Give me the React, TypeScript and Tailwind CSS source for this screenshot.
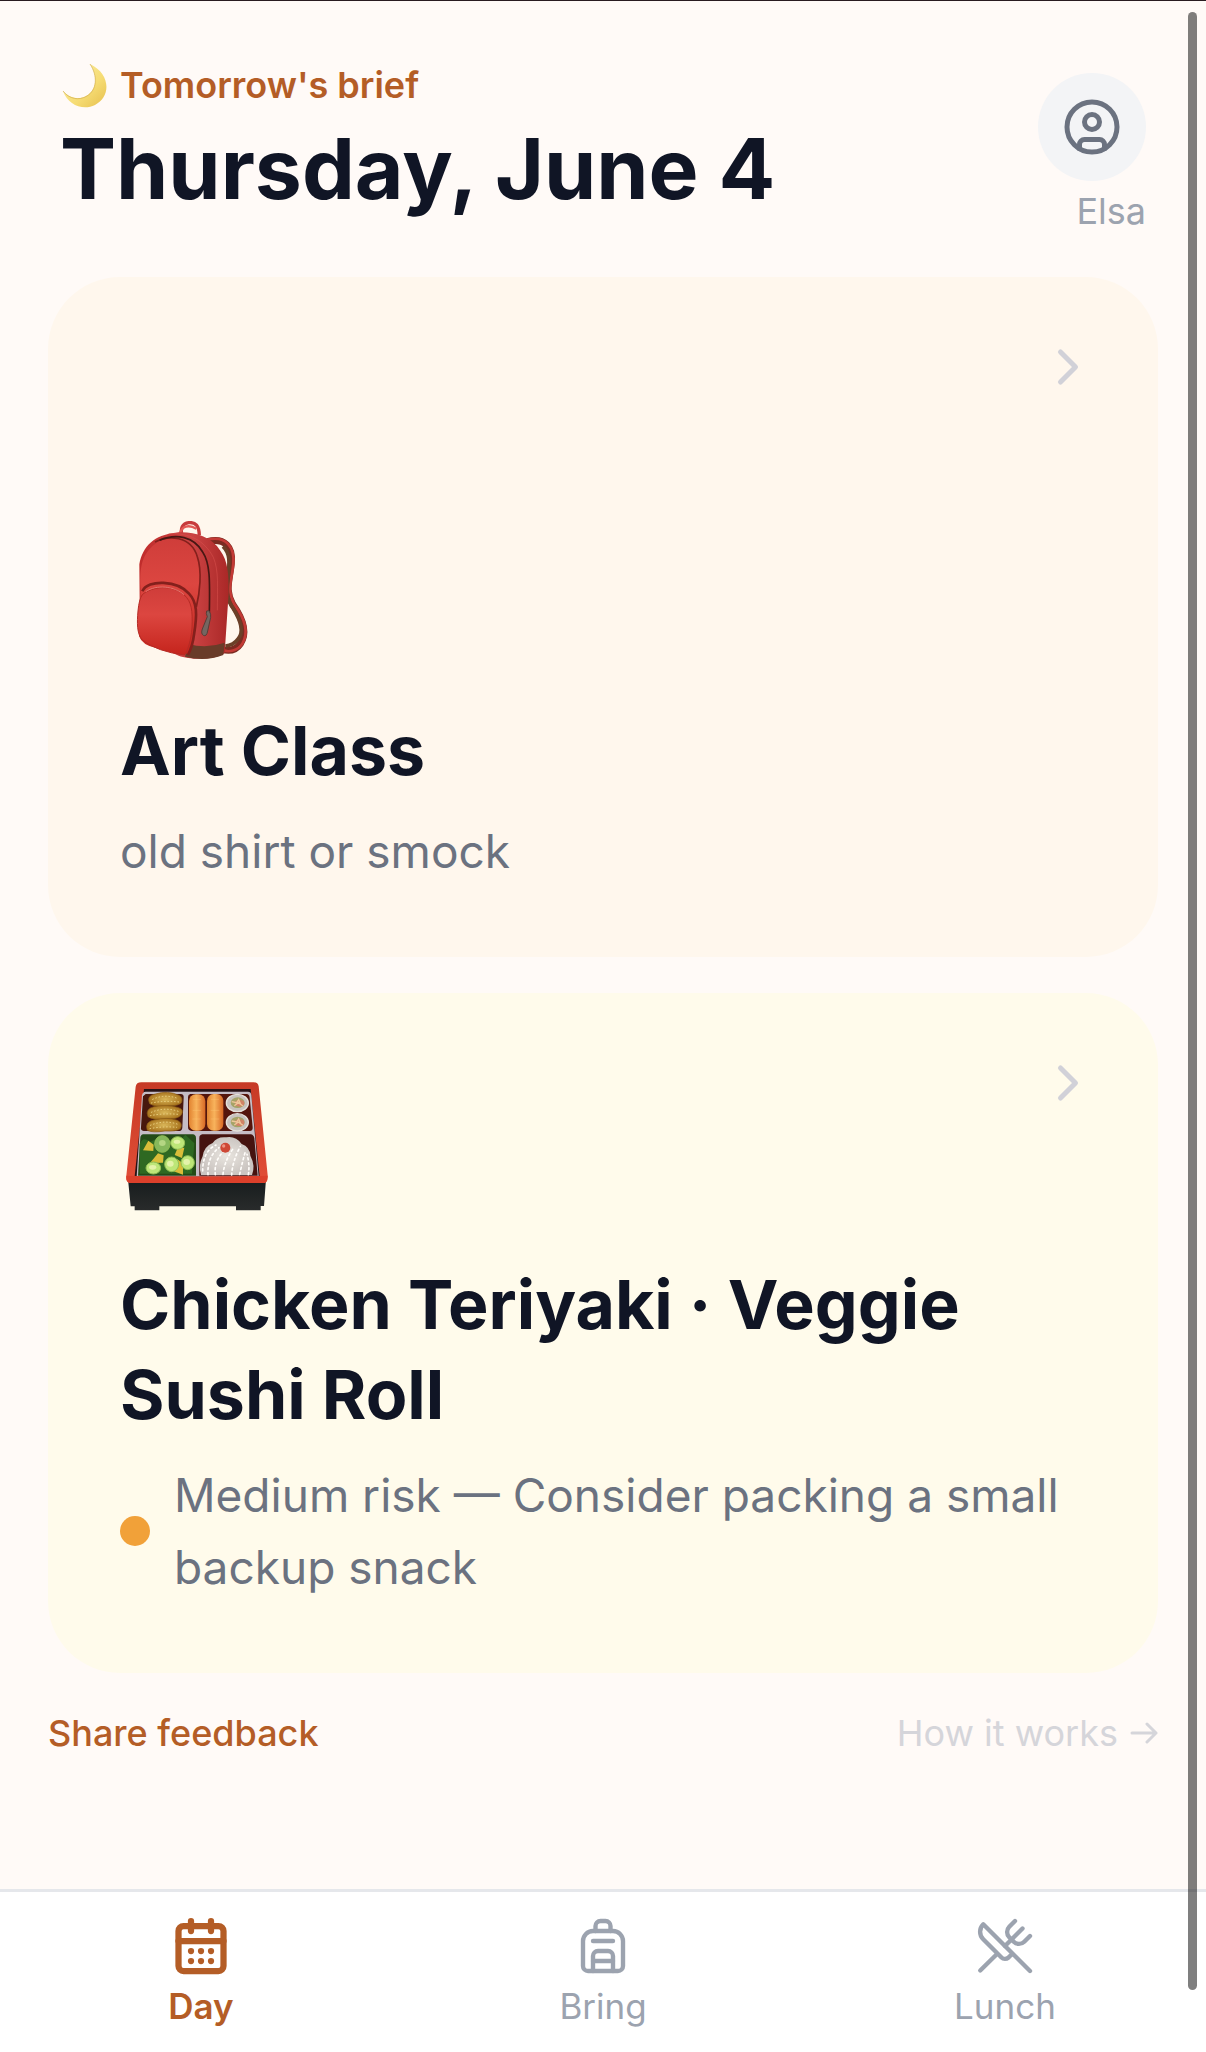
import type { ReactNode } from "react";
import { Backpack, CalendarDays, ChevronRight, CircleUser, UtensilsCrossed } from "lucide-react";

function MoonIcon() {
  return (
    <svg className="h-12 w-12" viewBox="0 0 48 48" aria-hidden="true">
      <defs>
        <linearGradient id="moon" x1="0" y1="0" x2="1" y2="1">
          <stop offset="0" stopColor="#fbf0a8" />
          <stop offset="0.6" stopColor="#f6dc74" />
          <stop offset="1" stopColor="#e6bf4d" />
        </linearGradient>
      </defs>
      <path d="M30 3C51 13 51 36 35 44C23 50 8 44 3 30C9 37 19 39 26 35C37 29 38 15 30 3Z" fill="url(#moon)" />
      <path d="M3 30C9 38 19 40 27 35C37 29 38 15 30 3" fill="none" stroke="#d3b154" strokeWidth="1" opacity="0.7" />
    </svg>
  );
}

function ArrowIcon() {
  return (
    <svg className="h-6 w-7" viewBox="0 0 28 24" fill="none" stroke="currentColor" strokeWidth="3" strokeLinecap="round" strokeLinejoin="round" aria-hidden="true">
      <path d="M2 12H26M17 3L26 12L17 21" />
    </svg>
  );
}

function BackpackPicture() {
  return (
    <svg className="h-36 w-36" viewBox="0 0 432 432" aria-hidden="true">
      <defs>
        <linearGradient id="bag" x1="0" y1="0" x2="0" y2="1">
          <stop offset="0" stopColor="#cf3d3a" />
          <stop offset="0.4" stopColor="#dc4640" />
          <stop offset="1" stopColor="#c5241c" />
        </linearGradient>
        <linearGradient id="bagSide" x1="0" y1="0" x2="1" y2="0">
          <stop offset="0" stopColor="#c02c2b" />
          <stop offset="0.6" stopColor="#cb4343" />
          <stop offset="1" stopColor="#aa2827" />
        </linearGradient>
      </defs>
      <path d="M262 62C315 48 339 80 334 126C328 181 314 207 338 250C372 298 382 337 361 368C347 389 325 390 308 386" fill="none" stroke="#7b2b21" strokeWidth="21" />
      <path d="M262 56C321 43 344 80 340 128C335 181 319 206 343 250C378 298 386 337 367 368C353 390 326 394 310 388" fill="none" stroke="#c33a35" strokeWidth="8" />
      <path d="M309 76C332 98 328 126 324 174C319 215 322 239 340 263C366 305 371 333 355 353C345 367 331 374 316 375" fill="none" stroke="#6b4028" strokeWidth="11" />
      <path d="M186 43C180 22 188 7 206 5C227 3 237 14 238 43" fill="none" stroke="#c73b3c" strokeWidth="10" />
      <path d="M179 38C186 16 205 9 229 23" fill="none" stroke="#e35a56" strokeWidth="7" />
      <path d="M60 350L58 130C68 74 104 42 166 35C213 30 274 44 301 89C324 120 326 159 326 215L314 396C286 418 210 417 176 404Z" fill="url(#bagSide)" />
      <path d="M205 369Q260 384 314 365L310 402Q255 423 195 407Z" fill="#693c29" />
      <path d="M62 205C57 129 70 94 112 64C154 35 210 53 230 100C248 142 243 205 229 265Q231 329 209 400L111 382Q66 373 57 345Z" fill="url(#bag)" />
      <path d="M105 63C145 42 213 43 232 107C247 151 239 216 229 258" fill="none" stroke="#84201c" strokeWidth="5" />
      <path d="M119 58C168 36 222 47 248 93C270 126 270 175 268 275" fill="none" stroke="#471713" strokeWidth="5" />
      <path d="M146 38C208 35 253 58 280 109C297 149 292 201 292 268" fill="none" stroke="#db5450" strokeWidth="3" opacity="0.5" />
      <path d="M67 211C83 174 173 178 207 218C232 244 232 281 222 341Q218 375 204 402" fill="none" stroke="#84201c" strokeWidth="8" />
      <path d="M67 221C96 195 158 190 193 222C215 243 218 267 216 321C213 357 204 386 194 402Q111 392 67 357C50 338 51 304 54 270Q57 235 67 221Z" fill="url(#bag)" stroke="#b52b25" strokeWidth="3" />
      <path d="M77 212C109 190 163 195 192 221" fill="none" stroke="#e6756d" strokeWidth="3" />
      <path d="M262 287Q257 277 260 270L267 269Q274 280 272 289L263 330Q260 348 250 343Q242 338 247 324Z" fill="#746661" stroke="#593e38" strokeWidth="3" />
    </svg>
  );
}

function BentoPicture() {
  return (
    <svg className="h-36 w-36 overflow-visible" viewBox="-12 0 432 432" aria-hidden="true">
      <defs>
        <linearGradient id="tray" x1="0" y1="0" x2="0" y2="1">
          <stop offset="0" stopColor="#c63a25" />
          <stop offset="1" stopColor="#e24e37" />
        </linearGradient>
        <linearGradient id="box" x1="0" y1="0" x2="0" y2="1">
          <stop offset="0" stopColor="#171c1d" />
          <stop offset="1" stopColor="#292b2b" />
        </linearGradient>
        <linearGradient id="salmon" x1="0" y1="0" x2="1" y2="0">
          <stop offset="0" stopColor="#e28431" />
          <stop offset="0.45" stopColor="#f8b35c" />
          <stop offset="1" stopColor="#d86925" />
        </linearGradient>
        <radialGradient id="croquette">
          <stop offset="0" stopColor="#d9b658" />
          <stop offset="1" stopColor="#a9751f" />
        </radialGradient>
        <radialGradient id="rice">
          <stop offset="0" stopColor="#e9e5df" />
          <stop offset="1" stopColor="#cbc5c1" />
        </radialGradient>
      </defs>
      <path d="M12 313H426L420 393H410V406H336V394H106V406H32V394H20Z" fill="url(#box)" />
      <path d="M52 22H390Q402 22 404 34L431 301Q433 324 418 324H20Q4 324 7 302L35 35Q37 22 52 22Z" fill="url(#tray)" />
      <path d="M60 42H380L407 304H32Z" fill="#271316" />
      <path d="M65 50H372Q381 50 382 60L404 304H38L54 61Q56 50 65 50Z" fill="#c5bcc5" />
      <path d="M65 57H170Q180 57 179 68L175 158Q174 168 164 168H59Q49 167 51 157L57 64Z" fill="#48170d" />
      <path d="M199 57H368Q376 57 377 68L386 157Q387 168 377 168H203Q192 167 192 157V66Q192 58 199 57Z" fill="#54150c" />
      <path d="M58 178H206Q216 179 216 190V302H42L49 188Q50 179 58 178Z" fill="#244b17" />
      <path d="M235 178H380Q389 179 391 190L401 302H226V188Q226 180 235 178Z" fill="#45130f" />
      <g fill="url(#croquette)" stroke="#8b5c17" strokeWidth="2">
        <path d="M77 86Q66 62 94 57Q132 45 165 61Q177 67 173 82Q166 93 136 92Q96 98 77 86Z" />
        <path d="M72 125Q62 102 90 95Q130 87 164 98Q182 104 171 121Q158 134 128 131Q90 137 72 125Z" />
        <path d="M70 166Q61 141 90 135Q131 125 160 136Q178 145 169 161Q157 170 123 168Q85 174 70 166Z" />
      </g>
      <g fill="none" stroke="#efd889" strokeWidth="3" strokeDasharray="2 8" strokeLinecap="round">
        <path d="M86 73Q121 56 161 70M82 84Q122 76 165 81M82 112Q121 95 163 109M79 122Q119 114 162 118M79 151Q120 134 159 147M78 161Q118 153 158 157" />
      </g>
      <rect x="195" y="58" width="49" height="109" rx="20" fill="url(#salmon)" />
      <rect x="249" y="57" width="49" height="110" rx="20" fill="url(#salmon)" />
      <path d="M207 73H231M206 106H231M205 132H230M261 73H285M260 106H286M260 132H286" stroke="#ffcd7b" strokeWidth="2" opacity="0.5" />
      {[84, 142].map((y) => (
        <g key={y}>
          <ellipse cx="340" cy={y} rx="33" ry="26" fill="#c7c3be" stroke="#e5e1da" strokeWidth="4" />
          <ellipse cx="341" cy={y - 1} rx="21" ry="16" fill="#a5a367" />
          <ellipse cx="347" cy={y + 1} rx="14" ry="10" fill="#d18366" />
          <path d={`M323 ${y - 4}l15 3 6-9 6 14M331 ${y + 8}l12-9 14 10`} fill="none" stroke="#edc79a" strokeWidth="4" />
        </g>
      ))}
      <path d="M47 207Q58 182 78 201L107 187L147 220L184 179L211 205L204 296H47Z" fill="#2e6922" />
      <path d="M57 226L73 197L89 209L88 228ZM78 264L102 235L119 241L117 263ZM152 240L161 219L181 218L174 249ZM145 287L160 253L177 265V299Z" fill="#d9bd39" />
      <g fill="#bde678" stroke="#90bd54" strokeWidth="3">
        <ellipse cx="115" cy="207" rx="23" ry="25" fill="#86b85c" />
        <ellipse cx="161" cy="204" rx="21" ry="19" />
        <ellipse cx="143" cy="268" rx="21" ry="22" />
        <ellipse cx="191" cy="263" rx="20" ry="21" />
        <ellipse cx="88" cy="279" rx="22" ry="18" />
      </g>
      <g fill="#e4f3aa">
        <ellipse cx="115" cy="204" rx="10" ry="9" opacity="0.5" />
        <ellipse cx="159" cy="200" rx="10" ry="6" />
        <ellipse cx="139" cy="266" rx="10" ry="9" />
        <ellipse cx="188" cy="261" rx="10" ry="9" />
        <ellipse cx="86" cy="277" rx="11" ry="7" />
      </g>
      <path d="M231 300Q222 271 236 244Q240 214 266 204Q279 184 307 187Q335 182 353 207Q378 216 379 242Q395 272 384 300Z" fill="url(#rice)" />
      <path d="M236 288Q236 229 276 210M252 299Q249 246 285 218M274 299Q269 253 305 224M297 298Q301 258 328 220M323 300Q325 259 349 214M347 298Q355 261 365 226M373 299Q378 269 369 238" fill="none" stroke="#fffdfa" strokeWidth="5" strokeDasharray="6 9" strokeLinecap="round" />
      <circle cx="304" cy="218" r="15" fill="#ce4836" />
      <circle cx="299" cy="213" r="5" fill="#ee9382" />
      <path d="M7 302Q220 308 431 302L429 314Q428 324 418 324H20Q7 322 7 310Z" fill="#dc402b" />
    </svg>
  );
}

type CardProps = {
  tone: string;
  picture: ReactNode;
  title: string;
  children: ReactNode;
};

function BriefCard({ tone, picture, title, children }: CardProps) {
  return (
    <a href="#" className={`relative flex min-h-[680px] flex-col justify-end rounded-[72px] px-[72px] pt-[76px] pb-[70px] ${tone}`}>
      <ChevronRight className="absolute top-15 right-15 h-15 w-15 text-[#d1d1d8]" />
      {picture}
      <h2 className="mt-10 text-[68px] leading-[90px] font-bold text-[#101525]">{title}</h2>
      <div className="mt-5 text-[46px] leading-[72px] text-[#6b7280]">{children}</div>
    </a>
  );
}

export default function App() {
  return (
    <div className="flex min-h-screen flex-col border-t border-[#291b20] bg-[#fffaf7] font-[Inter,sans-serif]">
      <header className="flex items-start justify-between pt-15 pr-15 pl-15">
        <div>
          <p className="flex items-center gap-3 text-[36px] leading-[48px] font-semibold text-[#b45d26]">
            <MoonIcon />
            Tomorrow's brief
          </p>
          <h1 className="mt-1.5 text-[84px] leading-[108px] font-bold text-[#101525]">Thursday, June 4</h1>
        </div>
        <div className="flex flex-col items-end pt-3">
          <button type="button" aria-label="Profile" className="flex h-27 w-27 items-center justify-center rounded-full bg-gray-100 text-[#6b7280]">
            <CircleUser className="h-15 w-15" />
          </button>
          <span className="mt-1 text-[36px] leading-[52px] text-[#9ca3af]">Elsa</span>
        </div>
      </header>

      <main className="flex flex-1 flex-col px-12 pt-10">
        <div className="flex flex-col gap-9">
          <BriefCard tone="bg-[#fff7ed]" picture={<BackpackPicture />} title="Art Class">
            old shirt or smock
          </BriefCard>
          <BriefCard tone="bg-[#fffbeb]" picture={<BentoPicture />} title="Chicken Teriyaki · Veggie Sushi Roll">
            <span className="flex items-center gap-6">
              <span className="h-[30px] w-[30px] shrink-0 rounded-full bg-[#f1a139]" />
              Medium risk — Consider packing a small backup snack
            </span>
          </BriefCard>
        </div>
        <div className="mt-9 flex items-center justify-between text-[36px] leading-[48px]">
          <a href="#" className="font-medium text-[#b45d26]">Share feedback</a>
          <a href="#" className="flex items-center gap-3 text-[#d5d5da]">
            How it works
            <ArrowIcon />
          </a>
        </div>
      </main>

      <nav className="grid grid-cols-3 border-t-3 border-gray-200 bg-white pt-6 pb-6 text-[35px] leading-[44px] text-[#9ca3af]">
        <a href="#" className="flex flex-col items-center gap-2 font-semibold text-[#b45d26]">
          <CalendarDays className="h-15 w-15" strokeWidth={2.5} />
          Day
        </a>
        <a href="#" className="flex flex-col items-center gap-2">
          <Backpack className="h-15 w-15" strokeWidth={1.75} />
          Bring
        </a>
        <a href="#" className="flex flex-col items-center gap-2">
          <UtensilsCrossed className="h-15 w-15" strokeWidth={1.75} />
          Lunch
        </a>
      </nav>

      <div className="fixed top-3 right-[9px] bottom-[62px] w-[9px] rounded-full bg-black/50" />
    </div>
  );
}
